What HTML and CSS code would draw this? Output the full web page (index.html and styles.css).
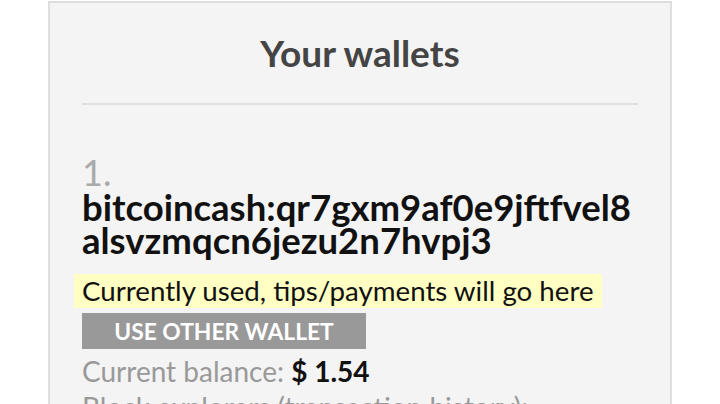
FILE: index.html
```html
<!DOCTYPE html>
<html>
<head>
<meta charset="utf-8">
<link rel="stylesheet" href="styles.css">
</head>
<body>
<div class="page">
  <div class="card">
    <h1 class="title">Your wallets</h1>
    <hr class="rule">
    <div class="wallet">
      <div class="num">1.</div>
      <div class="address">bitcoincash:qr7gxm9af0e9jftfvel8alsvzmqcn6jezu2n7hvpj3</div>
      <div class="current"><span class="mark">Currently used, tips/payments will go here</span></div>
      <div class="btn">USE OTHER WALLET</div>
      <div class="balance">Current balance: <b>$ 1.54</b></div>
      <div class="explorers">Block explorers (transaction history):</div>
    </div>
  </div>
</div>
</body>
</html>
```
FILE: styles.css
```css
html, body {
  margin: 0;
  padding: 0;
  background: #fff;
  font-family: Lato, "Liberation Sans", sans-serif;
}
.page {
  width: 720px;
  height: 404px;
  overflow: hidden;
}
.card {
  margin: 1px 0 0 48px;
  width: 556px;
  border: 2px solid #dedede;
  background: #f4f4f4;
  padding: 0 32px 40px;
}
.title {
  margin: 0;
  padding-top: 28px;
  font-size: 37px;
  font-weight: 700;
  color: #444;
  text-align: center;
  line-height: 44px;
}
.rule {
  border: 0;
  height: 2px;
  background: #e0e0e0;
  margin: 28px 0 0;
}
.wallet {
  padding-top: 48px;
}
.num {
  font-size: 36px;
  color: #aaa;
  line-height: 38px;
}
.address {
  font-size: 36.5px;
  font-weight: 700;
  color: #111;
  line-height: 33px;
  word-break: break-all;
}
.current {
  margin-top: 17px;
  margin-left: -8px;
}
.mark {
  display: inline-block;
  background: #ffffc4;
  padding: 0 8px;
  font-size: 27.7px;
  line-height: 34px;
  color: #111;
}
.btn {
  margin-top: 5px;
  width: 284px;
  height: 36px;
  background: #999;
  color: #fff;
  font-weight: 700;
  font-size: 22.8px;
  line-height: 36px;
  text-align: center;
}
.balance {
  margin-top: 4px;
  font-size: 28px;
  line-height: 36px;
  color: #999;
}
.balance b {
  color: #111;
}
.explorers {
  font-size: 28px;
  line-height: 36px;
  color: #999;
}
```
